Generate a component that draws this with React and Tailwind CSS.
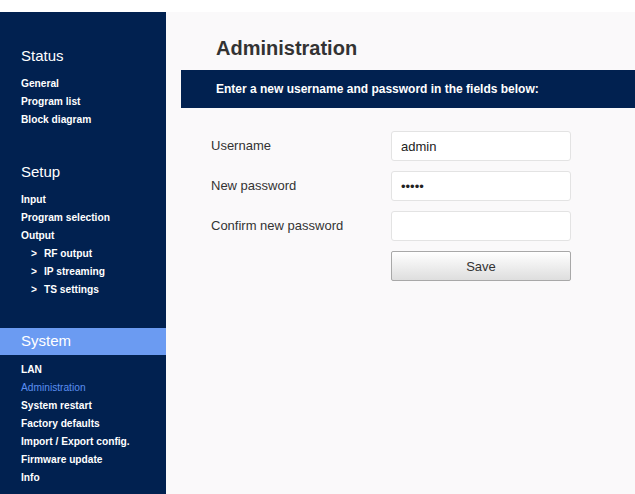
import React from 'react'

const groups = [
  { title: 'Status', items: [{ label: 'General' }, { label: 'Program list' }, { label: 'Block diagram' }] },
  {
    title: 'Setup',
    items: [
      { label: 'Input' },
      { label: 'Program selection' },
      { label: 'Output' },
      { label: 'RF output', sub: true },
      { label: 'IP streaming', sub: true },
      { label: 'TS settings', sub: true },
    ],
  },
  {
    title: 'System',
    active: true,
    items: [
      { label: 'LAN' },
      { label: 'Administration', current: true },
      { label: 'System restart' },
      { label: 'Factory defaults' },
      { label: 'Import / Export config.' },
      { label: 'Firmware update' },
      { label: 'Info' },
    ],
  },
]

function Sidebar() {
  return (
    <nav className="w-[166px] shrink-0 bg-[#012150] pt-[31px]">
      {groups.map((g, i) => (
        <div key={g.title} className={i === 0 ? '' : g.active ? 'mt-[29px]' : 'mt-[30px]'}>
          <div
            className={`h-[27px] flex items-center pl-[21px] text-[15px] text-white ${
              g.active ? 'bg-[#6b9bf2]' : ''
            }`}
          >
            {g.title}
          </div>
          <ul className={g.active ? 'mt-[6px]' : 'mt-[5px]'}>
            {g.items.map(item => (
              <li
                key={item.label}
                className={`h-[18px] leading-[18px] text-[10.2px] pl-[21px] ${
                  item.current ? 'text-[#5b8ff0] font-normal' : 'text-white font-bold'
                }`}
              >
                {item.sub ? (
                  <span className="pl-[10px]">
                    <span className="mr-[7px]">&gt;</span>
                    {item.label}
                  </span>
                ) : (
                  item.label
                )}
              </li>
            ))}
          </ul>
        </div>
      ))}
    </nav>
  )
}

function Field({ label, children }) {
  return (
    <div className="flex items-center h-[30px]">
      <label className="w-[180px] text-[13px] text-[#333]">{label}</label>
      {children}
    </div>
  )
}

const inputCls =
  'w-[180px] h-[30px] bg-white border border-[#e3e3e3] rounded-[3px] px-[9px] text-[13px] text-[#222] outline-none'

export default function App() {
  return (
    <div className="h-screen bg-white pt-[12px] flex" style={{ fontFamily: '"Liberation Sans", Arial, sans-serif' }}>
      <Sidebar />
      <main className="flex-1 bg-[#faf9fa]">
        <h1 className="pl-[50px] pt-[23px] h-[58px] text-[20px] font-bold text-[#333] leading-[26px]">Administration</h1>
        <div className="ml-[15px] h-[38px] bg-[#012150] flex items-center pl-[35px] text-[12px] font-bold text-white">
          Enter a new username and password in the fields below:
        </div>
        <form className="pl-[45px] pt-[23px] flex flex-col gap-[10px]" onSubmit={e => e.preventDefault()}>
          <Field label="Username">
            <input className={inputCls} defaultValue="admin" />
          </Field>
          <Field label="New password">
            <input type="password" className={inputCls} defaultValue="12345" />
          </Field>
          <Field label="Confirm new password">
            <input type="password" className={inputCls} />
          </Field>
          <div className="pl-[180px]">
            <button
              type="submit"
              className="w-[180px] h-[30px] pt-[1px] rounded-[2px] border border-[#a8a8a8] bg-gradient-to-b from-white to-[#dedede] text-[13px] text-[#333]"
            >
              Save
            </button>
          </div>
        </form>
      </main>
    </div>
  )
}
